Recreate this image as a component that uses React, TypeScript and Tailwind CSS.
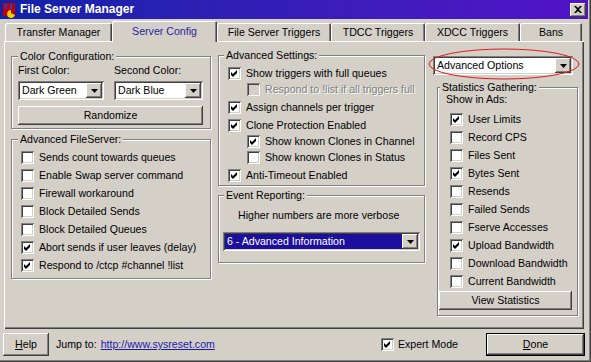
import type { ReactNode } from "react";

const raised =
  "shadow-[inset_-1px_-1px_0_#404040,inset_1px_1px_0_#fff,inset_-2px_-2px_0_#808080,inset_2px_2px_0_#d4d0c8]";
const sunken =
  "shadow-[inset_1px_1px_0_#808080,inset_-1px_-1px_0_#fff,inset_2px_2px_0_#404040,inset_-2px_-2px_0_#d4d0c8]";

function Check({ on, disabled }: { on?: boolean; disabled?: boolean }) {
  return (
    <span
      className={`relative block w-[13px] h-[13px] shrink-0 ${
        disabled ? "bg-[#d4d0c8]" : "bg-white"
      } shadow-[inset_1px_1px_0_#808080,inset_-1px_-1px_0_#fff,inset_2px_2px_0_#404040,inset_-2px_-2px_0_#d4d0c8]`}
    >
      {on && (
        <svg width="13" height="13" viewBox="0 0 13 13" className="absolute left-0 top-0">
          <polygon points="3,5 5,7 9,3 9,6 5,10 3,8" fill="#000" />
        </svg>
      )}
    </span>
  );
}

function CheckRow({
  label,
  on,
  disabled,
  className = "",
}: {
  label: string;
  on?: boolean;
  disabled?: boolean;
  className?: string;
}) {
  return (
    <div className={`flex items-center gap-[5px] ${className}`}>
      <Check on={on} disabled={disabled} />
      <span
        className={
          disabled ? "text-[#808080] [text-shadow:1px_1px_0_#fff] whitespace-nowrap" : "whitespace-nowrap"
        }
      >
        {label}
      </span>
    </div>
  );
}

function Arrow() {
  return (
    <div className={`w-[16px] h-full flex items-center justify-center bg-[#d4d0c8] ${raised}`}>
      <svg width="7" height="4" viewBox="0 0 7 4">
        <polygon points="0,0 7,0 3.5,4" fill="#000" />
      </svg>
    </div>
  );
}

function Select({
  value,
  className = "",
  selected,
}: {
  value: string;
  className?: string;
  selected?: boolean;
}) {
  return (
    <div className={`flex h-[19px] bg-white p-[2px] ${sunken} ${className}`}>
      <div
        className={`flex-1 flex items-center pl-[2px] whitespace-nowrap overflow-hidden ${
          selected ? "bg-[#1c0f9c] text-white" : ""
        }`}
      >
        {value}
      </div>
      <Arrow />
    </div>
  );
}

function Button({ children, className = "" }: { children: ReactNode; className?: string }) {
  return (
    <div className={`flex items-center justify-center bg-[#d4d0c8] ${raised} ${className}`}>
      {children}
    </div>
  );
}

function Group({
  title,
  className = "",
  legendLeft = "left-[7px]",
  children,
}: {
  title: string;
  className?: string;
  legendLeft?: string;
  children: ReactNode;
}) {
  return (
    <div className={`relative flex flex-col pt-[6px] ${className}`}>
      <div className="flex-1 flex flex-col border border-[#808080] shadow-[inset_1px_1px_0_#fff,1px_1px_0_#fff]">
        {children}
      </div>
      <span className={`absolute top-0 ${legendLeft} px-[2px] bg-[#d4d0c8] leading-[13px]`}>
        {title}
      </span>
    </div>
  );
}

const tabs = [
  { label: "Transfer Manager", w: "w-[107px]" },
  { label: "Server Config", w: "w-[105px]", active: true },
  { label: "File Server Triggers", w: "w-[114px]" },
  { label: "TDCC Triggers", w: "w-[94px]" },
  { label: "XDCC Triggers", w: "w-[95px]" },
  { label: "Bans", w: "w-[62px]" },
];

export default function App() {
  return (
    <div className="w-[591px] h-[362px] overflow-hidden bg-[#d4d0c8] text-[10.6px] leading-[13px] text-black font-['Liberation_Sans',Arial,sans-serif] flex flex-col shadow-[inset_-1px_-1px_0_#404040,inset_-2px_-2px_0_#808080]">
      {/* title bar */}
      <div className="h-[19px] mr-[3px] flex items-center bg-gradient-to-r from-[#0e22a8] to-[#5212c8]">
        <svg width="16" height="16" viewBox="0 0 16 16" className="ml-[2px]">
          <rect x="1" y="1" width="12" height="13" fill="#c00000" />
          <rect x="3" y="2" width="2" height="5" fill="#2040e0" />
          <rect x="8" y="2" width="2" height="5" fill="#2040e0" />
          <path d="M9 8 A4 4 0 1 0 13 13 L9 11 Z" fill="#f0d000" />
        </svg>
        <span className="ml-[2px] text-white font-bold text-[12px]">File Server Manager</span>
        <Button className="ml-auto mr-[2px] w-[16px] h-[14px]">
          <svg width="8" height="7" viewBox="0 0 8 7">
            <path d="M0 0 L2 0 L4 2 L6 0 L8 0 L5 3.5 L8 7 L6 7 L4 5 L2 7 L0 7 L3 3.5 Z" fill="#000" />
          </svg>
        </Button>
      </div>

      {/* tabs */}
      <div className="h-[22px] pl-[5px] flex items-end relative z-10">
        {tabs.map((t) => (
          <div
            key={t.label}
            className={`${t.w} flex items-center justify-center rounded-t-[2px] bg-[#d4d0c8] shadow-[inset_1px_1px_0_#fff,inset_-1px_0_0_#404040,inset_-2px_0_0_#808080] ${
              t.active ? "h-[21px] mb-[-1px] text-[#2a1fa0] pb-[1px]" : "h-[18px]"
            }`}
          >
            {t.label}
          </div>
        ))}
      </div>

      {/* panel */}
      <div className="ml-[4px] w-[580px] h-[288px] flex items-start shadow-[inset_1px_1px_0_#fff,inset_-1px_-1px_0_#404040,inset_-2px_-2px_0_#808080]">
        {/* left column */}
        <div className="ml-[7px] mt-[9px] w-[200px] flex flex-col gap-[4px]">
          <Group title="Color Configuration:" className="h-[79px]">
            <div className="pl-[6px] pt-[7px] flex">
              <div className="w-[96px] flex flex-col">
                <span>First Color:</span>
                <Select value="Dark Green" className="mt-[4px] w-[86px]" />
              </div>
              <div className="w-[89px] flex flex-col">
                <span>Second Color:</span>
                <Select value="Dark Blue" className="mt-[4px] w-[89px]" />
              </div>
            </div>
            <Button className="ml-[6px] mt-[6px] w-[185px] h-[19px]">Randomize</Button>
          </Group>
          <Group title="Advanced FileServer:" className="h-[146px]">
            <div className="pl-[9px] pt-[8px] flex flex-col">
              <CheckRow label="Sends count towards queues" className="h-[18px]" />
              <CheckRow label="Enable Swap server command" className="h-[18px]" />
              <CheckRow label="Firewall workaround" className="h-[18px]" />
              <CheckRow label="Block Detailed Sends" className="h-[18px]" />
              <CheckRow label="Block Detailed Queues" className="h-[18px]" />
              <CheckRow label="Abort sends if user leaves (delay)" on className="h-[18px]" />
              <CheckRow label="Respond to /ctcp #channel !list" on className="h-[18px]" />
            </div>
          </Group>
        </div>

        {/* middle column */}
        <div className="ml-[7px] mt-[8px] w-[207px] flex flex-col gap-[3px]">
          <Group title="Advanced Settings:" className="h-[137px]" legendLeft="left-[6px]">
            <div className="pl-[9px] pt-[9px] flex flex-col">
              <CheckRow label="Show triggers with full queues" on className="h-[16px]" />
              <CheckRow
                label="Respond to !list if all triggers full"
                disabled
                className="h-[16px] ml-[19px]"
              />
              <CheckRow label="Assign channels per trigger" on className="h-[16px] mt-[2px]" />
              <CheckRow label="Clone Protection Enabled" on className="h-[16px] mt-[2px]" />
              <CheckRow label="Show known Clones in Channel" on className="h-[16px] ml-[19px]" />
              <CheckRow label="Show known Clones in Status" className="h-[16px] ml-[19px]" />
              <CheckRow label="Anti-Timeout Enabled" on className="h-[16px] mt-[2px]" />
            </div>
          </Group>
          <Group title="Event Reporting:" className="h-[74px]" legendLeft="left-[6px]">
            <div className="pl-[19px] pt-[13px]">Higher numbers are more verbose</div>
            <Select value="6 - Advanced Information" selected className="ml-[4px] mt-[10px] w-[197px]" />
          </Group>
        </div>

        {/* right column */}
        <div className="ml-[5px] mt-[15px] w-[148px] flex flex-col">
          <div className="relative ml-[3px] w-[140px]">
            <Select value="Advanced Options" className="w-[140px]" />
            <svg
              width="156"
              height="34"
              viewBox="0 0 156 34"
              className="absolute left-[-6px] top-[-8px] pointer-events-none"
            >
              <ellipse cx="77" cy="16" rx="75" ry="15" fill="none" stroke="#e01818" strokeWidth="1" />
            </svg>
          </div>
          <Group
            title="Statistics Gathering:"
            className="ml-[7px] mt-[6px] w-[141px] h-[235px]"
            legendLeft="left-[3px]"
          >
            <div className="pl-[8px] pt-[5px]">Show in Ads:</div>
            <div className="pl-[12px] pt-[4px] flex flex-col">
              <CheckRow label="User Limits" on className="h-[18px]" />
              <CheckRow label="Record CPS" className="h-[18px]" />
              <CheckRow label="Files Sent" className="h-[18px]" />
              <CheckRow label="Bytes Sent" on className="h-[18px]" />
              <CheckRow label="Resends" className="h-[18px]" />
              <CheckRow label="Failed Sends" className="h-[18px]" />
              <CheckRow label="Fserve Accesses" className="h-[18px]" />
              <CheckRow label="Upload Bandwidth" on className="h-[18px]" />
              <CheckRow label="Download Bandwidth" className="h-[18px]" />
              <CheckRow label="Current Bandwidth" className="h-[18px]" />
            </div>
            <Button className="ml-[1px] mt-[1px] w-[133px] h-[19px]">View Statistics</Button>
          </Group>
        </div>
      </div>

      {/* footer */}
      <div className="mt-[4px] flex items-center">
        <Button className="ml-[3px] w-[46px] h-[23px]">
          <span>
            <span className="underline">H</span>elp
          </span>
        </Button>
        <span className="ml-[7px]">Jump to:</span>
        <span className="ml-[4px] text-[#1a1aa8] underline">http://www.sysreset.com</span>
        <div className="ml-auto flex items-center gap-[4px]">
          <Check on />
          <span>Expert Mode</span>
        </div>
        <div className="ml-[28px] mr-[6px] w-[99px] h-[23px] border border-black">
          <Button className="w-full h-full">
            <span>
              <span className="underline">D</span>one
            </span>
          </Button>
        </div>
      </div>
    </div>
  );
}
